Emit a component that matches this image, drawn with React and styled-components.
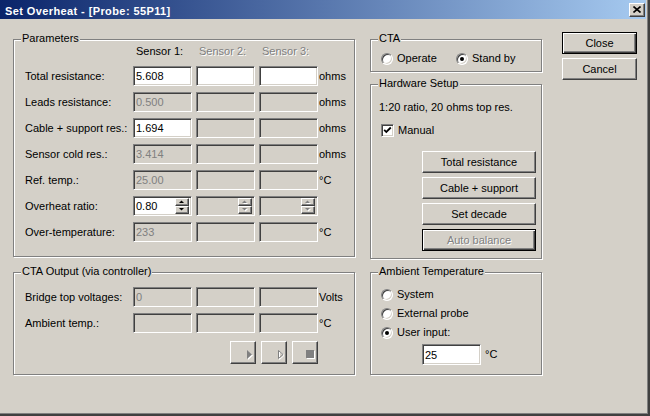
import React from "react";
import styled, { createGlobalStyle, css } from "styled-components";

const FACE = "#d4d0c8";
const FONT = `"Liberation Sans", Arial, sans-serif`;

const GlobalStyle = createGlobalStyle`
  html, body { margin: 0; padding: 0; background: ${FACE}; }
  body { font-family: ${FONT}; font-size: 11px; color: #000; }
  * { box-sizing: border-box; }
`;

const sunken = css`
  border: 1px solid;
  border-color: #808080 #fff #fff #808080;
  box-shadow: inset 1px 1px #404040, inset -1px -1px ${FACE};
`;

const raised = css`
  border: 1px solid;
  border-color: #fff #404040 #404040 #fff;
  box-shadow: inset -1px -1px #808080;
  background: ${FACE};
`;

const Window = styled.div`
  width: 650px;
  height: 416px;
  background: ${FACE};
  border-right: 2px solid #404040;
  border-bottom: 2px solid #404040;
  display: flex;
  flex-direction: column;
  overflow: hidden;
`;

const Frame = styled.div`
  flex: 1;
  display: flex;
  flex-direction: column;
  border-right: 1px solid #808080;
  border-bottom: 1px solid #808080;
  padding-right: 1px;
`;

const TitleBar = styled.div`
  height: 19px;
  flex: none;
  display: flex;
  align-items: flex-start;
  justify-content: space-between;
  padding: 3px 1px 0 5px;
  background: linear-gradient(to right, #0a246a, #a6caf0);
`;

const Title = styled.span`
  margin-top: 2px;
  font-family: ${FONT};
  font-weight: bold;
  font-size: 11px;
  line-height: 13px;
  letter-spacing: 0.4px;
  color: #fff;
  white-space: nowrap;
`;

const CaptionButton = styled.div`
  ${raised};
  width: 16px;
  height: 14px;
  display: flex;
  align-items: center;
  justify-content: center;
  padding: 0 1px 1px 0;
`;

const Body = styled.div`
  flex: 1;
  display: flex;
  align-items: flex-start;
  gap: 15px;
  padding: 13px 0 0 13px;
`;

const Column = styled.div`
  display: flex;
  flex-direction: column;
  padding-top: 7px;
  gap: ${(p) => p.$gap}px;
`;

const ButtonColumn = styled.div`
  display: flex;
  flex-direction: column;
  gap: 4px;
  margin-left: 5px;
`;

const Group = styled.div`
  position: relative;
  width: ${(p) => p.$w}px;
  border: 1px solid #808080;
  box-shadow: inset 1px 1px #fff, 1px 1px #fff;
  padding: ${(p) => p.$pad};
  display: flex;
  flex-direction: column;
`;

const Legend = styled.span`
  position: absolute;
  top: -8px;
  left: 7px;
  padding: 0 1px;
  line-height: 13px;
  background: ${FACE};
  white-space: nowrap;
`;

const FieldGrid = styled.div`
  display: grid;
  grid-template-columns: 104px 59px 59px 59px auto;
  grid-template-rows: ${(p) => p.$rows};
  column-gap: 4px;
  row-gap: ${(p) => p.$rowGap}px;
  align-items: center;
`;

const Label = styled.span`
  line-height: 13px;
  white-space: nowrap;
`;

const Header = styled.span`
  align-self: start;
  padding-left: 3px;
  line-height: 13px;
  white-space: nowrap;
  color: ${(p) => (p.$off ? "#808080" : "#000")};
  text-shadow: ${(p) => (p.$off ? "1px 1px #fff" : "none")};
`;

const Unit = styled.span`
  margin-left: -3px;
  line-height: 13px;
  white-space: nowrap;
`;

const Field = styled.input`
  ${sunken};
  display: block;
  width: ${(p) => (p.$w ? `${p.$w}px` : "100%")};
  height: ${(p) => p.$h || 20}px;
  margin: 0;
  padding: 0 0 0 2px;
  outline: none;
  font-family: ${FONT};
  font-size: 11px;
  background: ${(p) => (p.disabled ? FACE : "#fff")};
  color: ${(p) => (p.disabled ? "#808080" : "#000")};
  -webkit-text-fill-color: ${(p) => (p.disabled ? "#808080" : "#000")};
  opacity: 1;
`;

const SpinBox = styled.div`
  ${sunken};
  height: 20px;
  display: flex;
  align-items: stretch;
  background: ${(p) => (p.$off ? FACE : "#fff")};
`;

const SpinText = styled.span`
  flex: 1;
  padding-left: 2px;
  line-height: 18px;
  color: ${(p) => (p.$off ? "#808080" : "#000")};
`;

const SpinButtons = styled.div`
  display: flex;
  flex-direction: column;
  justify-content: center;
  padding: 1px 2px 1px 0;
`;

const SpinArrow = styled.div`
  ${raised};
  width: 14px;
  height: 8px;
  display: flex;
  align-items: center;
  justify-content: center;
`;

const Row = styled.div`
  display: flex;
  align-items: center;
  gap: ${(p) => p.$gap || 0}px;
  margin: ${(p) => p.$m || 0};
`;

const RadioRow = styled.div`
  display: grid;
  grid-template-columns: 75px auto;
`;

const RadioList = styled.div`
  display: flex;
  flex-direction: column;
  gap: 6px;
`;

const Choice = styled.label`
  display: flex;
  align-items: center;
  gap: 4px;
  height: 13px;
  line-height: 13px;
  white-space: nowrap;
`;

const RadioCircle = styled.span`
  flex: none;
  width: 12px;
  height: 12px;
  border-radius: 50%;
  border: 1px solid;
  border-color: #808080 #fff #fff #808080;
  box-shadow: inset 1px 1px #404040, inset -1px -1px ${FACE};
  background: #fff;
  display: flex;
  align-items: center;
  justify-content: center;
  &::after {
    content: "";
    width: 4px;
    height: 4px;
    border-radius: 50%;
    background: #000;
    display: ${(p) => (p.$on ? "block" : "none")};
  }
`;

const CheckBoxBox = styled.span`
  ${sunken};
  flex: none;
  width: 13px;
  height: 13px;
  background: #fff;
  display: flex;
  align-items: center;
  justify-content: center;
`;

const Note = styled.div`
  line-height: 13px;
  white-space: nowrap;
`;

const ActionStack = styled.div`
  display: flex;
  flex-direction: column;
  align-items: flex-end;
  gap: 4px;
  margin-top: 14px;
`;

const Button = styled.button`
  ${raised};
  width: ${(p) => p.$w}px;
  height: ${(p) => p.$h || 22}px;
  margin: 0;
  padding: 0;
  font-family: ${FONT};
  font-size: 11px;
  color: ${(p) => (p.disabled ? "#808080" : "#000")};
  text-shadow: ${(p) => (p.disabled ? "1px 1px #fff" : "none")};
  ${(p) =>
    p.$default &&
    css`
      border-color: #000;
      box-shadow: inset 1px 1px #fff, inset -1px -1px #404040,
        inset -2px -2px #808080;
    `}
`;

const MediaBar = styled.div`
  grid-column: 2 / 5;
  justify-self: end;
  display: flex;
  gap: 5px;
`;

const MediaButton = styled.div`
  ${raised};
  width: 26px;
  height: 23px;
  svg {
    display: block;
  }
`;

const CloseGlyph = () => (
  <svg width="8" height="7" viewBox="0 0 8 7">
    <path d="M0.5 0.5 L7.5 6.5 M7.5 0.5 L0.5 6.5" stroke="#000" strokeWidth="1.6" />
  </svg>
);

const Arrow = ({ up, off }) => {
  const pts = up ? "0,3 5,3 2.5,0.5" : "0,0 5,0 2.5,2.5";
  return (
    <svg width="6" height="4" viewBox="0 0 6 4">
      {off && <polygon points={pts} fill="#fff" transform="translate(1,1)" />}
      <polygon points={pts} fill={off ? "#808080" : "#000"} />
    </svg>
  );
};

const Spin = ({ value, off }) => (
  <SpinBox $off={off}>
    <SpinText $off={off}>{value}</SpinText>
    <SpinButtons>
      <SpinArrow>
        <Arrow up off={off} />
      </SpinArrow>
      <SpinArrow>
        <Arrow off={off} />
      </SpinArrow>
    </SpinButtons>
  </SpinBox>
);

const Radio = ({ on, children }) => (
  <Choice>
    <RadioCircle $on={on} />
    {children}
  </Choice>
);

const params = [
  { label: "Total resistance:", values: ["5.608", "", ""], on: [1, 1, 1], unit: "ohms" },
  { label: "Leads resistance:", values: ["0.500", "", ""], on: [0, 0, 0], unit: "ohms" },
  { label: "Cable + support res.:", values: ["1.694", "", ""], on: [1, 0, 0], unit: "ohms" },
  { label: "Sensor cold res.:", values: ["3.414", "", ""], on: [0, 0, 0], unit: "ohms" },
  { label: "Ref. temp.:", values: ["25.00", "", ""], on: [0, 0, 0], unit: "°C" },
  { label: "Overheat ratio:", values: ["0.80", "", ""], on: [1, 0, 0], unit: "", spin: true },
  { label: "Over-temperature:", values: ["233", "", ""], on: [0, 0, 0], unit: "°C" },
];

const outputs = [
  { label: "Bridge top voltages:", values: ["0", "", ""], unit: "Volts" },
  { label: "Ambient temp.:", values: ["", "", ""], unit: "°C" },
];

const FieldRow = ({ row }) => (
  <>
    <Label>{row.label}</Label>
    {row.values.map((v, i) =>
      row.spin ? (
        <Spin key={i} value={v} off={!row.on[i]} />
      ) : (
        <Field key={i} value={v} readOnly disabled={!row.on[i]} />
      )
    )}
    <Unit>{row.unit}</Unit>
  </>
);

export default function App() {
  return (
    <>
      <GlobalStyle />
      <Window>
        <Frame>
          <TitleBar>
            <Title>Set Overheat - [Probe: 55P11]</Title>
            <CaptionButton>
              <CloseGlyph />
            </CaptionButton>
          </TitleBar>
          <Body>
            <Column $gap={15}>
              <Group $w={342} $pad="5px 0 14px 11px">
                <Legend>Parameters</Legend>
                <FieldGrid $rows="15px repeat(7, 20px)" $rowGap={6}>
                  <span />
                  <Header>Sensor 1:</Header>
                  <Header $off>Sensor 2:</Header>
                  <Header $off>Sensor 3:</Header>
                  <span />
                  {params.map((r) => (
                    <FieldRow key={r.label} row={r} />
                  ))}
                </FieldGrid>
              </Group>
              <Group $w={342} $pad="14px 0 10px 11px">
                <Legend>CTA Output (via controller)</Legend>
                <FieldGrid $rows="20px 20px" $rowGap={6}>
                  {outputs.map((r) => (
                    <FieldRow key={r.label} row={{ ...r, on: [0, 0, 0] }} />
                  ))}
                </FieldGrid>
                <FieldGrid $rows="23px" $rowGap={0} style={{ marginTop: 8 }}>
                  <MediaBar>
                    <MediaButton>
                      <svg width="24" height="21" viewBox="0 0 24 21">
                        <polygon points="17,9 22,13.5 17,18" fill="#fff" />
                        <polygon points="16,8 21,12.5 16,17" fill="#808080" />
                      </svg>
                    </MediaButton>
                    <MediaButton>
                      <svg width="24" height="21" viewBox="0 0 24 21">
                        <polygon points="17.5,9.5 22,13.5 17.5,17.5" fill="none" stroke="#fff" strokeWidth="1" />
                        <polygon points="16.5,8.5 21,12.5 16.5,16.5" fill="none" stroke="#808080" strokeWidth="1" />
                      </svg>
                    </MediaButton>
                    <MediaButton>
                      <svg width="24" height="21" viewBox="0 0 24 21">
                        <rect x="14" y="9" width="8" height="8" fill="#fff" />
                        <rect x="13" y="8" width="8" height="8" fill="#808080" />
                      </svg>
                    </MediaButton>
                  </MediaBar>
                </FieldGrid>
              </Group>
            </Column>

            <Column $gap={12}>
              <Group $w={172} $pad="12px 0 6px 10px">
                <Legend>CTA</Legend>
                <RadioRow>
                  <Radio>Operate</Radio>
                  <Radio on>Stand by</Radio>
                </RadioRow>
              </Group>
              <Group $w={172} $pad="16px 5px 7px 8px">
                <Legend>Hardware Setup</Legend>
                <Note>1:20 ratio, 20 ohms top res.</Note>
                <Row $gap={4} $m="10px 0 0 2px">
                  <CheckBoxBox>
                    <svg width="9" height="9" viewBox="0 0 9 9">
                      <path d="M1.2 3.8 L3.3 6 L7.8 1.5" fill="none" stroke="#000" strokeWidth="1.8" />
                    </svg>
                  </CheckBoxBox>
                  <Note>Manual</Note>
                </Row>
                <ActionStack>
                  <Button $w={114}>Total resistance</Button>
                  <Button $w={114}>Cable + support</Button>
                  <Button $w={114}>Set decade</Button>
                  <Button $w={114} $default disabled>
                    Auto balance
                  </Button>
                </ActionStack>
              </Group>
              <Group $w={172} $pad="15px 0 9px 10px" style={{ marginTop: 1 }}>
                <Legend>Ambient Temperature</Legend>
                <RadioList>
                  <Radio>System</Radio>
                  <Radio>External probe</Radio>
                  <Radio on>User input:</Radio>
                </RadioList>
                <Row $gap={4} $m="5px 0 0 41px">
                  <Field $w={59} $h={21} value="25" readOnly />
                  <Note>°C</Note>
                </Row>
              </Group>
            </Column>

            <ButtonColumn>
              <Button $w={75} $h={22} $default>
                Close
              </Button>
              <Button $w={75} $h={22}>
                Cancel
              </Button>
            </ButtonColumn>
          </Body>
        </Frame>
      </Window>
    </>
  );
}
